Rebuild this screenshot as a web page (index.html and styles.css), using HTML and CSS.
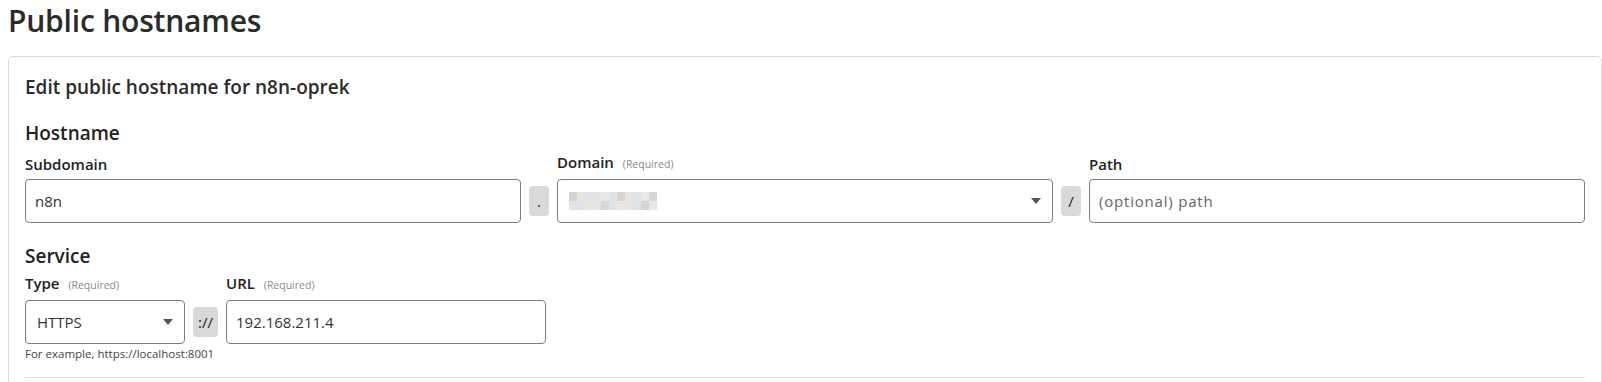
FILE: index.html
```html
<!DOCTYPE html>
<html lang="en">
<head>
<meta charset="utf-8">
<title>Public hostnames</title>
<link rel="stylesheet" href="styles.css">
</head>
<body>
<div class="page">
  <h1 class="page-title">Public hostnames</h1>
  <div class="card">
    <h2 class="card-title">Edit public hostname for n8n-oprek</h2>

    <h3 class="section-title">Hostname</h3>
    <div class="row hostname-row">
      <div class="field grow">
        <label class="label">Subdomain</label>
        <div class="control input"><span class="value">n8n</span></div>
      </div>
      <div class="addon">.</div>
      <div class="field grow">
        <label class="label">Domain <span class="req">(Required)</span></label>
        <div class="control input select">
          <div class="blur">
            <span class="px c1"></span><span class="px c2"></span><span class="px c3"></span><span class="px c2"></span><span class="px c4"></span><span class="px c3"></span><span class="px c1"></span><span class="px c2"></span><span class="px c3"></span><span class="px c4"></span><span class="px c5"></span>
            <span class="px c2"></span><span class="px c3"></span><span class="px c4"></span><span class="px c2"></span><span class="px c5"></span><span class="px c3"></span><span class="px c4"></span><span class="px c2"></span><span class="px c3"></span><span class="px c1"></span><span class="px c4"></span>
          </div>
          <span class="caret"></span>
        </div>
      </div>
      <div class="addon">/</div>
      <div class="field grow">
        <label class="label">Path</label>
        <div class="control input"><span class="placeholder">(optional) path</span></div>
      </div>
    </div>

    <h3 class="section-title service-title">Service</h3>
    <div class="row service-row">
      <div class="field type-field">
        <label class="label">Type <span class="req">(Required)</span></label>
        <div class="control input select type-select"><span class="value">HTTPS</span><span class="caret"></span></div>
      </div>
      <div class="addon addon-wide">://</div>
      <div class="field url-field">
        <label class="label">URL <span class="req">(Required)</span></label>
        <div class="control input"><span class="value">192.168.211.4</span></div>
      </div>
    </div>
    <p class="hint">For example, https://localhost:8001</p>
    <div class="divider"></div>
  </div>
</div>
</body>
</html>
```
FILE: styles.css
```css
* { box-sizing: border-box; }
html, body { margin: 0; padding: 0; background: #fff; }
body {
  font-family: "Open Sans", "Noto Sans", "Liberation Sans", sans-serif;
  color: #333;
  width: 1602px;
  height: 382px;
  overflow: hidden;
}
.page { padding-left: 8px; }
.page-title {
  margin: 0;
  font-size: 30px;
  line-height: 42px;
  font-weight: 600;
  color: #2b2b2b;
  letter-spacing: -0.2px;
}
.card {
  margin-top: 14px;
  border: 1px solid #d9d9d9;
  border-radius: 5px;
  padding: 16px 16px 0 16px;
  height: 400px;
}
.card-title {
  margin: 0;
  font-size: 19px;
  line-height: 28px;
  font-weight: 600;
  color: #2b2b2b;
}
.section-title {
  margin: 20px 0 0 0;
  font-size: 19px;
  line-height: 24px;
  font-weight: 600;
  color: #222;
}
.service-title { margin-top: 21px; }
.row {
  display: flex;
  align-items: flex-end;
}
.field { display: flex; flex-direction: column; }
.grow { flex: 1 1 0; min-width: 0; }
.label {
  font-size: 15px;
  line-height: 20px;
  font-weight: 600;
  color: #222;
  margin-top: 7px;
  margin-bottom: 5px;
}
.service-row .label { margin-top: 5px; }
.req {
  font-size: 10.5px;
  font-weight: 400;
  color: #8a8a8a;
  margin-left: 5px;
}
.control {
  height: 44px;
  border: 1px solid #7d7d7d;
  border-radius: 4px;
  display: flex;
  align-items: center;
  padding: 0 9px;
  font-size: 15px;
  color: #333;
}
.type-select { padding-left: 11px; }
.placeholder { color: #666; letter-spacing: 0.8px; }
.addon {
  flex: 0 0 auto;
  width: 20px;
  height: 30px;
  margin: 0 8px 7px 8px;
  background: #d9d9d9;
  border-radius: 4px;
  display: flex;
  align-items: center;
  justify-content: center;
  font-size: 15px;
  color: #222;
}
.addon-wide { width: 25px; margin-right: 8px; }
.select { justify-content: space-between; }
.caret {
  width: 0; height: 0;
  border-left: 5px solid transparent;
  border-right: 5px solid transparent;
  border-top: 6px solid #555;
  margin-right: 2px;
}
.blur {
  display: grid;
  grid-template-columns: repeat(11, 8px);
  grid-auto-rows: 9px;
  margin-left: 2px;
}
.px { display: block; }
.c1 { background: #d6d2d0; }
.c2 { background: #e6e3e2; }
.c3 { background: #dfe2e6; }
.c4 { background: #e9e6e4; }
.c5 { background: #d3d7dc; }
.type-field { width: 160px; }
.url-field { width: 320px; }
.hint {
  margin: 2px 0 0 0;
  font-size: 11.5px;
  line-height: 16px;
  color: #444;
}
.divider {
  margin-top: 15px;
  border-top: 1px solid #ddd;
}
```
